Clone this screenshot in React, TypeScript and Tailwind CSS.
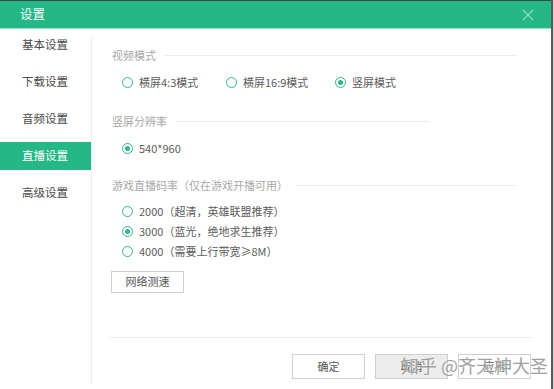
import React from "react";

const FONT = { fontFamily: '"Noto Sans CJK SC", "Noto Sans", sans-serif' };

function Radio({ checked, label, w }: { checked?: boolean; label: string; w?: string }) {
  return (
    <div className={`flex items-center h-[16px] ${w ?? ""}`}>
      <span className="w-[11px] h-[11px] rounded-full border-[1.5px] border-[#2db887] flex items-center justify-center shrink-0">
        {checked && <span className="w-[5px] h-[5px] rounded-full bg-[#2db887]" />}
      </span>
      <span className="ml-[6px] text-[11px] text-[#5c5c5c] leading-none whitespace-nowrap">{label}</span>
    </div>
  );
}

function Header({ label, lineClass }: { label: string; lineClass?: string }) {
  return (
    <div className="flex items-center h-[16px]">
      <span className="text-[11px] text-[#a8a8a8] leading-none whitespace-nowrap">{label}</span>
      <span className={`ml-[8px] h-px bg-[#ececec] ${lineClass ?? "flex-1"}`} />
    </div>
  );
}

export default function App() {
  const items = ["基本设置", "下载设置", "音频设置", "直播设置", "高级设置"];
  return (
    <div className="w-[554px] h-[389px] bg-white flex relative overflow-hidden" style={FONT}>
      <div className="w-[551px] h-full flex flex-col border-t border-[#3a4742]">
        <div className="h-[27px] bg-[#25b886] flex items-center justify-between pl-[20px] pr-[17px] shrink-0">
          <span className="text-[12.5px] text-white leading-none">设置</span>
          <svg width="12" height="12" viewBox="0 0 12 12" className="opacity-50">
            <path d="M1 1L11 11M11 1L1 11" stroke="white" strokeWidth="1.2" />
          </svg>
        </div>
        <div className="h-px bg-[#9fe3c9] shrink-0" />
        <div className="flex flex-1 min-h-0">
          <div className="w-[91px] flex flex-col gap-[9px] pt-[2px] shrink-0">
            {items.map((t) => (
              <div
                key={t}
                className={`h-[28px] flex items-center pl-[22px] text-[11.5px] leading-none ${
                  t === "直播设置" ? "bg-[#25b886] text-white" : "text-[#4a4a4a]"
                }`}
              >
                {t}
              </div>
            ))}
          </div>
          <div className="w-px bg-[#ececec] mt-[9px] mb-[4px] shrink-0" />
          <div className="flex-1 flex flex-col">
            <div className="flex flex-col pl-[20px] pr-[34px] pt-[18px]">
              <Header label="视频模式" />
              <div className="flex mt-[11px] pl-[10px]">
                <Radio label="横屏4:3模式" w="w-[104px]" />
                <Radio label="横屏16:9模式" w="w-[109px]" />
                <Radio label="竖屏模式" checked />
              </div>
              <div className="mt-[23px]">
                <Header label="竖屏分辨率" lineClass="w-[255px]" />
              </div>
              <div className="mt-[11px] pl-[10px]">
                <Radio label="540*960" checked />
              </div>
              <div className="mt-[21px]">
                <Header label="游戏直播码率（仅在游戏开播可用）" />
              </div>
              <div className="mt-[10px] pl-[10px] flex flex-col gap-[4px]">
                <Radio label="2000（超清，英雄联盟推荐）" />
                <Radio label="3000（蓝光，绝地求生推荐）" checked />
                <Radio label="4000（需要上行带宽≥8M）" />
              </div>
              <div className="mt-[8px] -ml-[1px]">
                <button className="w-[73px] h-[22px] border border-[#cfcfcf] bg-white text-[11px] text-[#555] leading-none">
                  网络测速
                </button>
              </div>
            </div>
            <div className="mt-auto">
              <div className="h-px bg-[#ececec] mx-[18px]" />
              <div className="flex justify-end gap-[10px] pr-[20px] mt-[16px] mb-[10px]">
                <button className="w-[73px] h-[25px] border border-[#cfcfcf] bg-white text-[11px] text-[#555] leading-none">
                  确定
                </button>
                <button className="w-[73px] h-[25px] border border-[#cfcfcf] bg-[#ececec] text-[11px] text-[#555] leading-none">
                  取消
                </button>
                <button className="w-[73px] h-[25px] border border-[#cfcfcf] bg-white text-[11px] text-[#555] leading-none">
                  应用
                </button>
              </div>
            </div>
          </div>
        </div>
      </div>
      <div className="w-[2px] h-full bg-[#5a5a5a]" />
      <div className="w-px h-full bg-[#d0d0d0]" />
      <div
        className="absolute left-[401px] top-[356px] text-[18px] leading-none text-[#a0a0a0] whitespace-nowrap"
        style={{ textShadow: "0 0 2px #fff" }}
      >
        知乎 @齐天神大圣
      </div>
    </div>
  );
}
